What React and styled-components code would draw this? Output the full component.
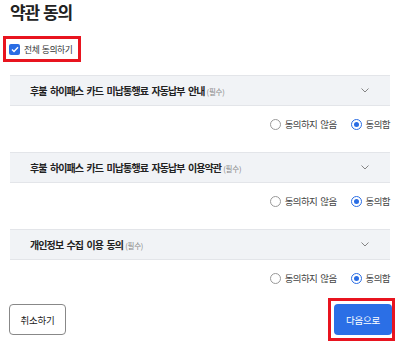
import React, { useState } from "react";
import styled, { createGlobalStyle } from "styled-components";

const Global = createGlobalStyle`
  html, body { margin: 0; padding: 0; background: #fff; }
  body { font-family: "Noto Sans CJK KR", "Noto Sans", sans-serif; color: #222; }
  * { box-sizing: border-box; }
`;

const Page = styled.div`
  width: 400px;
  height: 351px;
  padding: 1px 10px 0;
  display: flex;
  flex-direction: column;
`;

const Title = styled.h1`
  margin: 0;
  font-size: 17px;
  line-height: 21px;
  font-weight: 700;
  letter-spacing: -1.2px;
  word-spacing: 1.5px;
  color: #222;
`;

const Highlight = styled.div`
  border: 3px solid #e8141f;
  display: inline-flex;
  align-self: flex-start;
`;

const AllRow = styled(Highlight)`
  margin: 14px 0 0 -7px;
  padding: 2px 6px 2px 3px;
  align-items: center;
  gap: 4px;
  font-size: 8.8px;
  letter-spacing: -0.45px;
  word-spacing: 1px;
  color: #333;
  height: 26px;
`;

const CheckBox = styled.span`
  width: 11px;
  height: 11px;
  border-radius: 2px;
  background: #2a6de4;
  display: inline-flex;
  align-items: center;
  justify-content: center;
`;

const Sections = styled.div`
  margin-top: 13px;
  display: flex;
  flex-direction: column;
  gap: 10px;
`;

const Header = styled.div`
  height: 31px;
  background: #f1f3f6;
  border-top: 1px solid #e3e5e9;
  border-bottom: 1px solid #e3e5e9;
  display: flex;
  align-items: center;
  justify-content: space-between;
  padding: 0 21px 0 20px;
`;

const HeaderTitle = styled.span`
  font-size: 10px;
  font-weight: 700;
  letter-spacing: -0.9px;
  word-spacing: 2px;
  color: #222;
`;

const Req = styled.span`
  font-size: 7.5px;
  font-weight: 400;
  letter-spacing: -0.2px;
  word-spacing: 0;
  color: #888;
  margin-left: 2px;
`;

const RadioRow = styled.div`
  height: 36px;
  display: flex;
  justify-content: flex-end;
  align-items: center;
  gap: 14px;
`;

const RadioLabel = styled.label`
  display: inline-flex;
  align-items: center;
  gap: 4px;
  font-size: 9.5px;
  letter-spacing: -0.6px;
  word-spacing: 1.5px;
  color: #444;
  cursor: pointer;
`;

const RadioCircle = styled.span`
  width: 11px;
  height: 11px;
  border-radius: 50%;
  border: 1px solid ${(p) => (p.$on ? "#2a6de4" : "#999")};
  display: inline-flex;
  align-items: center;
  justify-content: center;
  &::after {
    content: "";
    width: 5px;
    height: 5px;
    border-radius: 50%;
    background: ${(p) => (p.$on ? "#2a6de4" : "transparent")};
  }
`;

const Footer = styled.div`
  margin-top: auto;
  margin-bottom: 10px;
  display: flex;
  justify-content: space-between;
  align-items: center;
`;

const CancelButton = styled.button`
  width: 57px;
  height: 31px;
  border: 1px solid #888;
  border-radius: 4px;
  background: #fff;
  font-family: inherit;
  font-size: 9.5px;
  letter-spacing: -0.3px;
  color: #222;
  margin-left: -1px;
`;

const NextWrap = styled(Highlight)`
  padding: 3px 0 3px 3px;
  margin-right: -5px;
`;

const NextButton = styled.button`
  width: 58px;
  height: 31px;
  border: none;
  border-radius: 4px;
  background: #2b6fe6;
  color: #fff;
  font-family: inherit;
  font-size: 9.5px;
  letter-spacing: -0.3px;
`;

const Chevron = () => (
  <svg width="8" height="5" viewBox="0 0 8 5" fill="none">
    <path d="M0.5 0.5 L4 4 L7.5 0.5" stroke="#777" strokeWidth="0.9" />
  </svg>
);

const terms = [
  "후불 하이패스 카드 미납통행료 자동납부 안내",
  "후불 하이패스 카드 미납통행료 자동납부 이용약관",
  "개인정보 수집 이용 동의",
];

export default function App() {
  const [vals, setVals] = useState([true, true, true]);
  const set = (i, v) => setVals((a) => a.map((x, j) => (j === i ? v : x)));
  return (
    <>
      <Global />
      <Page>
        <Title>약관 동의</Title>
        <AllRow>
          <CheckBox>
            <svg width="8" height="7" viewBox="0 0 8 7">
              <path d="M1 3.5 L3 5.5 L7 1.2" stroke="#fff" strokeWidth="1.4" fill="none" />
            </svg>
          </CheckBox>
          전체 동의하기
        </AllRow>
        <Sections>
          {terms.map((t, i) => (
            <div key={t}>
              <Header>
                <HeaderTitle>
                  {t}
                  <Req>(필수)</Req>
                </HeaderTitle>
                <Chevron />
              </Header>
              <RadioRow>
                <RadioLabel onClick={() => set(i, false)}>
                  <RadioCircle $on={!vals[i]} />
                  동의하지 않음
                </RadioLabel>
                <RadioLabel onClick={() => set(i, true)}>
                  <RadioCircle $on={vals[i]} />
                  동의함
                </RadioLabel>
              </RadioRow>
            </div>
          ))}
        </Sections>
        <Footer>
          <CancelButton>취소하기</CancelButton>
          <NextWrap>
            <NextButton>다음으로</NextButton>
          </NextWrap>
        </Footer>
      </Page>
    </>
  );
}
